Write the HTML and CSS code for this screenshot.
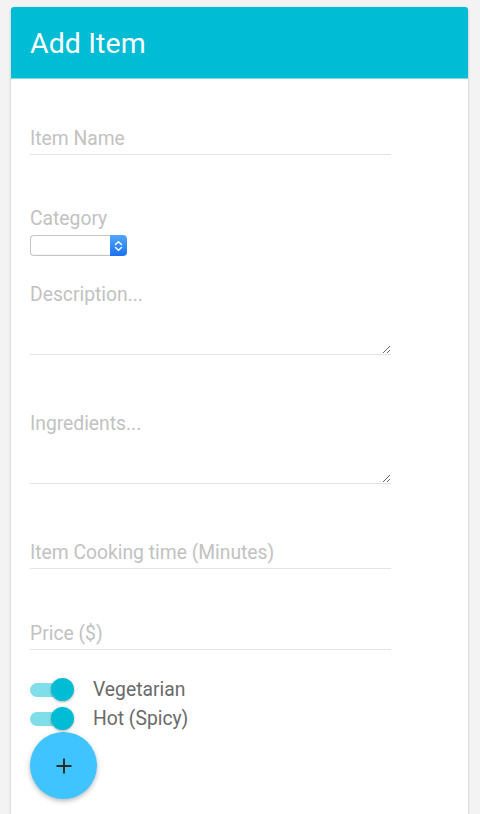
FILE: index.html
```html
<!DOCTYPE html>
<html>
<head>
<meta charset="utf-8">
<link rel="stylesheet" href="styles.css">
</head>
<body>
<div class="card">
  <div class="card-header"><h1 class="title">Add Item</h1></div>
  <form class="card-body">
    <input class="field field-name" type="text" placeholder="Item Name">
    <label class="label">Category</label>
    <div class="select">
      <span class="select-box"></span>
      <span class="select-stepper">
        <svg width="9" height="12" viewBox="0 0 9 12"><path d="M1.5 4.5 L4.5 1.8 L7.5 4.5 M1.5 7.5 L4.5 10.2 L7.5 7.5" fill="none" stroke="#fff" stroke-width="1.5" stroke-linecap="round" stroke-linejoin="round"/></svg>
      </span>
    </div>
    <textarea class="area area-desc" placeholder="Description..."></textarea>
    <textarea class="area area-ingr" placeholder="Ingredients..."></textarea>
    <input class="field field-time" type="text" placeholder="Item Cooking time (Minutes)">
    <input class="field field-price" type="text" placeholder="Price ($)">
    <div class="toggles">
      <div class="toggle-row"><span class="switch"><span class="knob"></span></span><span class="toggle-label">Vegetarian</span></div>
      <div class="toggle-row"><span class="switch"><span class="knob"></span></span><span class="toggle-label">Hot (Spicy)</span></div>
    </div>
    <button class="fab" type="button">
      <svg width="18" height="18" viewBox="0 0 18 18"><path d="M9 1.5 V16.5 M1.5 9 H16.5" stroke="#2b2b2b" stroke-width="2"/></svg>
    </button>
  </form>
</div>
</body>
</html>
```
FILE: styles.css
```css
html, body {
  margin: 0;
  padding: 0;
  background: #f3f3f3;
  font-family: Roboto, "Noto Sans", sans-serif;
  overflow: hidden;
}
body {
  padding: 7px 12px 0 11px;
  height: 814px;
  box-sizing: border-box;
}
.card {
  background: #fff;
  border-radius: 3px;
  box-shadow: 0 1px 3px rgba(0,0,0,0.22);
  height: 900px;
  overflow: hidden;
}
.card-header {
  background: #00bcd4;
  height: 72px;
  display: flex;
  align-items: center;
  padding-left: 19px;
  border-bottom: 1px solid #7fdde9;
  box-sizing: border-box;
}
.title {
  margin: 0;
  color: #fff;
  font-weight: 400;
  font-size: 28.5px;
  letter-spacing: 0.1px;
  padding-top: 1px;
}
.card-body {
  display: flex;
  flex-direction: column;
  align-items: flex-start;
  padding: 0 19px;
  margin: 0;
}
.field, .area {
  width: 361px;
  box-sizing: border-box;
  border: none;
  border-bottom: 1px solid #e4e4e4;
  font-family: Roboto, "Noto Sans", sans-serif;
  font-size: 19.3px;
  color: #333;
  padding: 0;
  outline: none;
  background: transparent;
}
.field { height: 31px; padding-bottom: 2px; }
.field::placeholder, .area::placeholder { color: #c2c2c2; }
.field-name { margin-top: 45px; }
.label {
  margin-top: 53px;
  font-size: 19.3px;
  line-height: 22px;
  color: #c2c2c2;
}
.select {
  margin-top: 5px;
  display: flex;
  width: 97px;
  height: 21px;
}
.select-box {
  flex: 1;
  border: 1px solid #c4c4c4;
  border-right: none;
  border-radius: 4px 0 0 4px;
  background: #fff;
  box-shadow: inset 0 -1px 1px rgba(0,0,0,0.04);
}
.select-stepper {
  width: 17px;
  border-radius: 0 4px 4px 0;
  background: linear-gradient(#52a7ff, #1a72ee);
  display: flex;
  align-items: center;
  justify-content: center;
}
.area {
  height: 71px;
  resize: both;
  padding-top: 0;
  line-height: 22px;
  display: block;
}
.area-desc { margin-top: 28px; }
.area-ingr { margin-top: 58px; }
.field-time { margin-top: 54px; }
.field-price { margin-top: 50px; }
.toggles {
  margin-top: 25px;
  display: flex;
  flex-direction: column;
}
.toggle-row {
  height: 29px;
  display: flex;
  align-items: center;
}
.switch {
  position: relative;
  width: 37px;
  height: 14px;
  border-radius: 7px;
  background: #80deea;
  margin-right: 26px;
}
.knob {
  position: absolute;
  right: -7px;
  top: -4.5px;
  width: 23px;
  height: 23px;
  border-radius: 50%;
  background: #00bcd4;
  box-shadow: 0 1px 3px rgba(0,0,0,0.3);
}
.toggle-label {
  font-size: 19.3px;
  color: #6a6a6a;
}
.fab {
  margin-top: -1px;
  width: 67px;
  height: 67px;
  border-radius: 50%;
  border: none;
  background: #40c4ff;
  box-shadow: 0 2px 5px rgba(0,0,0,0.28);
  display: flex;
  align-items: center;
  justify-content: center;
  padding: 0;
}
```
